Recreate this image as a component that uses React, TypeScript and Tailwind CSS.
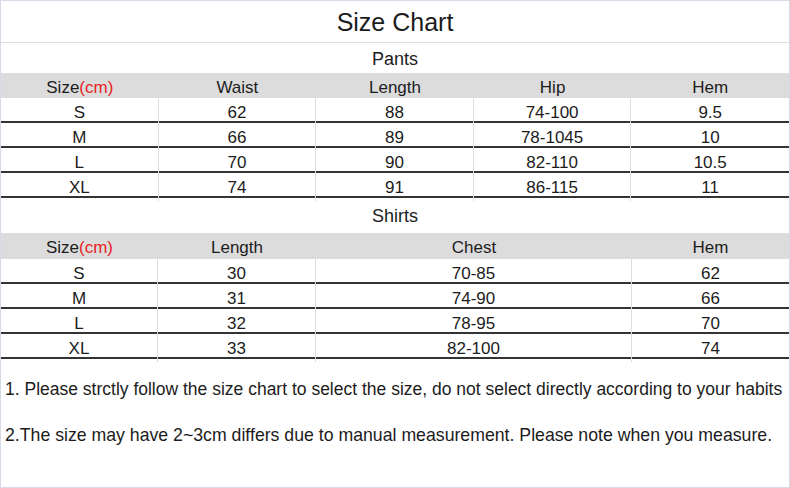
const pants = [
  ['S', '62', '88', '74-100', '9.5'],
  ['M', '66', '89', '78-1045', '10'],
  ['L', '70', '90', '82-110', '10.5'],
  ['XL', '74', '91', '86-115', '11'],
];

const shirts = [
  ['S', '30', '70-85', '62'],
  ['M', '31', '74-90', '66'],
  ['L', '32', '78-95', '70'],
  ['XL', '33', '82-100', '74'],
];

const font = { fontFamily: "'Liberation Sans', 'DejaVu Sans', sans-serif" };

function SizeHead() {
  return (
    <div className="flex items-center justify-center pt-[2px]">
      Size<span className="text-[#e8231f]">(cm)</span>
    </div>
  );
}

export default function App() {
  return (
    <div
      className="w-[790px] h-[488px] bg-white border border-[#d6d9e6] text-[#1c1c1c] flex flex-col overflow-hidden"
      style={font}
    >
      {/* Title */}
      <div className="h-[42px] flex items-center justify-center pt-[2px] text-[25px] border-b border-[#dcdcdc]">
        Size Chart
      </div>

      {/* Pants */}
      <div className="h-[30px] flex items-center justify-center pt-[2px] text-[18px]">Pants</div>
      <div className="h-[25px] grid grid-cols-5 bg-[#dcdcdc] text-[17px]">
        <SizeHead />
        <div className="flex items-center justify-center pt-[2px]">Waist</div>
        <div className="flex items-center justify-center pt-[2px]">Length</div>
        <div className="flex items-center justify-center pt-[2px]">Hip</div>
        <div className="flex items-center justify-center pt-[2px]">Hem</div>
      </div>
      {pants.map((row) => (
        <div key={row[0]} className="h-[25px] grid grid-cols-5 border-b-2 border-[#333] text-[17px]">
          {row.map((cell, i) => (
            <div
              key={i}
              className={`flex items-center justify-center pt-[2px] ${i < 4 ? 'border-r border-[#dcdce4]' : ''}`}
            >
              {cell}
            </div>
          ))}
        </div>
      ))}

      {/* Shirts */}
      <div className="h-[35px] flex items-center justify-center pt-[2px] text-[18px]">Shirts</div>
      <div className="h-[26px] grid grid-cols-[157px_158px_316px_1fr] bg-[#dcdcdc] text-[17px]">
        <SizeHead />
        <div className="flex items-center justify-center pt-[2px]">Length</div>
        <div className="flex items-center justify-center pt-[2px]">Chest</div>
        <div className="flex items-center justify-center pt-[2px]">Hem</div>
      </div>
      {shirts.map((row) => (
        <div
          key={row[0]}
          className="h-[25px] grid grid-cols-[157px_158px_316px_1fr] border-b-2 border-[#333] text-[17px]"
        >
          {row.map((cell, i) => (
            <div
              key={i}
              className={`flex items-center justify-center pt-[2px] ${i < 3 ? 'border-r border-[#dcdce4]' : ''}`}
            >
              {cell}
            </div>
          ))}
        </div>
      ))}

      {/* Notes */}
      <div className="flex flex-col pl-[4px] pt-[18px] gap-[22px] text-[17.5px] leading-[24px] whitespace-nowrap">
        <p>1. Please strctly follow the size chart to select the size, do not select directly according to your habits</p>
        <p className="text-[17.7px]">2.The size may have 2~3cm differs due to manual measurement. Please note when you measure.</p>
      </div>
    </div>
  );
}
